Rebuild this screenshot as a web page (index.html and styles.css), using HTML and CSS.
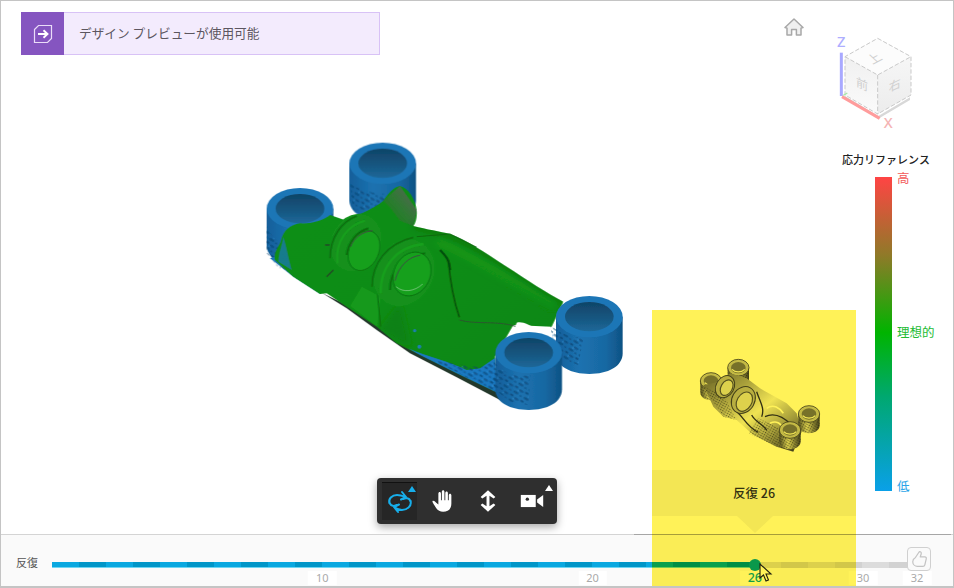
FILE: index.html
```html
<!DOCTYPE html>
<html lang="ja">
<head>
<meta charset="utf-8">
<title>デザイン プレビュー</title>
<link rel="stylesheet" href="styles.css">
</head>
<body>
<div class="frame">
  <main class="viewport">
    <div class="banner">
      <div class="banner-icon">
        <svg viewBox="0 0 20 20" width="20" height="20" fill="none" stroke="#eadcf8">
          <path d="M1.5 5.5 5.5 1.5H18.5V14.5L14.5 18.5H1.5Z" stroke-width="1.2"/>
          <path d="M5 10H14M10.5 6.2 14.5 10 10.5 13.8" stroke="#fff" stroke-width="1.9"/>
        </svg>
      </div>
      <span class="banner-text">デザイン プレビューが使用可能</span>
    </div>

    <svg class="home" viewBox="0 0 20 20" fill="none" stroke="#a8a8a8" stroke-width="1.5">
      <path d="M1 10.5 10 2l9 8.5-2 .6V18h-4.600v-5.500H7.600V18H3v-6.900Z" fill="#f0f0f0" stroke-linejoin="round"/>
    </svg>

    <svg class="navcube" viewBox="0 0 450 390">
      <defs>
        <linearGradient id="faceL" x1="0" y1="0" x2="0" y2="1"><stop offset="0" stop-color="#f0f0f0"/><stop offset="1" stop-color="#fbfbfb"/></linearGradient>
        <linearGradient id="faceR" x1="0" y1="0" x2="0" y2="1"><stop offset="0" stop-color="#f6f6f6"/><stop offset="1" stop-color="#ececec"/></linearGradient>
      </defs>
      <polygon points="225,258 325,318 420,262 420,270 325,326 225,266" fill="#d8d8d8"/>
      <polygon points="323,85 423,140 323,195 225,140" fill="#fcfcfc"/>
      <polygon points="225,140 323,195 323,312 225,255" fill="url(#faceL)"/>
      <polygon points="323,195 423,140 423,255 323,312" fill="url(#faceR)"/>
      <path d="M323 85 423 140 423 255 323 312 225 255 225 140ZM225 140 323 195 423 140M323 195V312" fill="none" stroke="#c9c9c9" stroke-width="3" stroke-dasharray="13 6"/>
      <text class="cube-label" transform="translate(323 155) rotate(-28) skewX(20)">上</text>
      <text class="cube-label" transform="translate(276 236) skewY(25)">前</text>
      <text class="cube-label" transform="translate(374 238) skewY(-25)">右</text>
      <path d="M214 128V258" stroke="#a9a9ff" stroke-width="9"/>
      <path d="M216 260 329 325" stroke="#ff9c9c" stroke-width="9"/>
      <path d="M220 256 232 249" stroke="#a8e8a8" stroke-width="4"/>
      <text class="axis-z" x="214" y="110">Z</text>
      <text class="axis-x" x="355" y="355">X</text>
    </svg>

    <!-- 3D model: coordinates are 3x screen pixels -->
    <svg class="model" viewBox="0 0 1170 870">
      <defs>
        <linearGradient id="cyl" x1="0" y1="0" x2="1" y2="0">
          <stop offset="0" stop-color="#125f9a"/><stop offset=".35" stop-color="#1c72b0"/><stop offset=".75" stop-color="#1868a2"/><stop offset="1" stop-color="#0e5284"/>
        </linearGradient>
        <linearGradient id="holeG" x1="0" y1="0" x2="0" y2="1">
          <stop offset="0" stop-color="#104468"/><stop offset=".55" stop-color="#165680"/><stop offset="1" stop-color="#1d6899"/>
        </linearGradient>
        <linearGradient id="bodyG" x1="0" y1="0" x2="1" y2="1">
          <stop offset="0" stop-color="#11901a"/><stop offset=".5" stop-color="#0f8c14"/><stop offset="1" stop-color="#0b8411"/>
        </linearGradient>
        <linearGradient id="topG" x1="0" y1="1" x2="1" y2="0">
          <stop offset="0" stop-color="#0f8514"/><stop offset=".5" stop-color="#2f7a33"/><stop offset="1" stop-color="#5e5e5e"/>
        </linearGradient>
        <pattern id="lattice" width="36" height="28" patternUnits="userSpaceOnUse" patternTransform="rotate(32)">
          <ellipse cx="7" cy="6" rx="6" ry="3" fill="#0a4270" opacity=".65"/>
          <ellipse cx="25" cy="9" rx="8" ry="3.500" fill="#0a4270" opacity=".55"/>
          <ellipse cx="14" cy="21" rx="9" ry="3.500" fill="#0a4270" opacity=".6"/>
          <ellipse cx="31" cy="23" rx="4" ry="2.500" fill="#0a4270" opacity=".5"/>
          <circle cx="17" cy="13" r="2.500" fill="#3b94d4" opacity=".55"/>
        </pattern>
        <filter id="soft"><feGaussianBlur stdDeviation="1.8"/></filter>
        <filter id="softer" x="-30%" y="-30%" width="160%" height="160%"><feGaussianBlur stdDeviation="9"/></filter>
        <clipPath id="bodyClip">
          <path d="M92 335C100 300 120 285 150 280 190 282 225 268 240 255L290 272C330 250 375 235 400 212 415 190 430 172 450 168 475 175 495 205 500 240 502 262 497 278 490 288 530 298 570 305 600 312 650 330 700 365 770 410 830 448 890 490 940 515L905 590 790 585 735 680 745 790 620 730 480 660 440 640 380 590 290 530 230 490 210 492 130 440 75 390C70 370 85 350 92 335Z"/>
        </clipPath>
        <g id="boss">
          <path d="M-100 0V110C-100 150-55 172 0 172S100 150 100 110V0Z" fill="url(#cyl)"/>
          <ellipse rx="100" ry="62" fill="#1e76b6"/>
          <ellipse rx="73" ry="44" fill="url(#holeG)"/>
        </g>
      </defs>
      <g filter="url(#soft)">
        <use href="#boss" x="398" y="100"/>
        <path d="M300 160C330 180 370 190 400 192L420 240H310Z" fill="url(#lattice)"/>
        <use href="#boss" x="150" y="236"/>
        <path d="M50 290C65 320 80 335 100 340L90 420 50 370Z" fill="url(#lattice)"/>
        <path d="M60 385 130 440 210 492 230 470 170 420 100 370Z" fill="#1a74b4"/>
        <path d="M60 385 130 440 210 492 190 440 110 380Z" fill="url(#lattice)"/>

        <path d="M215 488 290 535 380 600 480 670 620 742 760 815 745 785 620 725 480 655 380 585 290 525Z" fill="#24372c"/>

        <g clip-path="url(#bodyClip)">
          <rect width="1170" height="870" fill="url(#bodyG)"/>
          <path d="M400 212 450 168 500 240 490 288 450 272 420 232Z" fill="url(#topG)"/>
          <path d="M560 330C660 370 780 450 920 520" fill="none" stroke="#1aa021" stroke-width="34" opacity=".45" filter="url(#softer)"/>
          <path d="M490 288C570 305 650 330 770 410 830 448 890 490 940 515" fill="none" stroke="#06600b" stroke-width="12" opacity=".6" filter="url(#softer)"/>
          <path d="M390 600 480 650 450 520Z" fill="#0c7e12" opacity=".7" filter="url(#softer)"/>
          <path d="M300 528 382 590 392 500 335 470Z" fill="#15991c"/>
          <path d="M475 655C530 680 600 695 650 720L690 715 740 680 745 800 620 745Z" fill="#1a78c0"/>
          <path d="M540 690 620 725 745 800 745 690 690 712Z" fill="url(#lattice)"/>
          <path d="M100 320C95 350 85 370 85 395L125 420C115 385 110 350 100 320Z" fill="#1a74b4" opacity=".75"/>
        </g>

        <path d="M500 320 600 312 680 352" fill="none" stroke="#0a6a0f" stroke-width="3"/>
        <path d="M595 390C600 450 610 510 628 562" fill="none" stroke="#06560a" stroke-width="5"/>
        <path d="M570 360C590 380 600 395 600 420" fill="none" stroke="#05500a" stroke-width="7"/>
        <path d="M628 570C680 585 740 570 800 590" fill="none" stroke="#2a5a30" stroke-width="3"/>
        <path d="M380 470 392 590" fill="none" stroke="#086a0d" stroke-width="3"/>
        <path d="M240 345 225 345M230 440 250 420" fill="none" stroke="#234a28" stroke-width="4"/>
        <circle cx="494" cy="602" r="5" fill="#1b7fb0"/>
        <circle cx="508" cy="650" r="6" fill="#1b7fb0"/>

        <ellipse cx="318" cy="338" rx="76" ry="90" transform="rotate(30 318 338)" fill="#12901a"/>
        <path d="M240 385C240 320 275 275 320 258" fill="none" stroke="#087010" stroke-width="5"/>
        <path d="M262 400C255 330 295 285 345 272" fill="none" stroke="#18a01f" stroke-width="6"/>
        <path d="M290 375C295 335 320 305 355 295" fill="none" stroke="#086a0e" stroke-width="5"/>
        <ellipse cx="342" cy="362" rx="44" ry="62" transform="rotate(24 342 362)" fill="#17a01e" stroke="#0a6a0e" stroke-width="2"/>
        <path d="M302 350C310 325 335 305 368 302" fill="none" stroke="#40503f" stroke-width="3"/>

        <ellipse cx="462" cy="428" rx="90" ry="106" transform="rotate(32 462 428)" fill="#12901a"/>
        <path d="M366 470C366 400 410 340 490 322" fill="none" stroke="#087010" stroke-width="5"/>
        <path d="M392 490C390 410 440 350 520 342" fill="none" stroke="#18a01f" stroke-width="7"/>
        <path d="M420 480C420 420 460 375 525 370" fill="none" stroke="#086a0e" stroke-width="5"/>
        <ellipse cx="486" cy="432" rx="54" ry="68" transform="rotate(26 486 432)" fill="#17a01e" stroke="#0a6a0e" stroke-width="2"/>
        <path d="M435 452C445 410 475 380 510 376" fill="none" stroke="#3c5040" stroke-width="3"/>
        <path d="M438 470C458 488 492 486 518 462" fill="none" stroke="#bfe0bf" stroke-width="1.500"/>

        <path d="M800 578C815 572 840 585 860 598 835 600 810 600 795 592Z" fill="#fff"/>
        <use href="#boss" x="1018" y="560"/>
        <path d="M900 585C930 610 960 620 1000 625L985 705 920 680Z" fill="url(#lattice)"/>
        <use href="#boss" x="836" y="668"/>
        <path d="M735 700C760 730 800 745 840 735L835 825 780 815 725 770Z" fill="url(#lattice)"/>
      </g>
    </svg>

    <section class="legend">
      <h2 class="legend-title">応力リファレンス</h2>
      <div class="legend-scale">
        <div class="legend-bar"></div>
        <div class="legend-labels">
          <span class="lab-high">高</span>
          <span class="lab-ideal">理想的</span>
          <span class="lab-low">低</span>
        </div>
      </div>
    </section>

    <div class="toolbar">
      <button class="tool tool-active">
        <svg viewBox="0 0 30 30" width="30" height="30" fill="none" stroke="#17aeea" stroke-width="2" stroke-linecap="round" stroke-linejoin="round">
          <path d="M4.500 16C3 12 7 8 12 8 15 8 18 9 21 10M17 5 21 10 16 12.500"/>
          <path d="M25.500 14C27 19 22 23 17 23 14 23 12 22 9 20M13 25 9 20 14 17.500"/>
          <path d="M4.500 16C6 19 9 19.500 12 18M25.500 14C24 11 21 10.500 18 12"/>
        </svg>
        <i class="caret caret-blue"></i>
      </button>
      <button class="tool">
        <svg viewBox="0 0 30 30" width="26" height="26" fill="#fff">
          <path d="M6 17c-1.500-2-3.500-3-4.200-2-.6.900 1 3 2.500 5.500C6.800 25 9.500 27.500 14 27.500c6 0 9.500-3.500 9.500-9.500V8.500c0-1.100-.7-1.800-1.500-1.800s-1.500.7-1.500 1.800V14h-1V5.800C19.500 4.700 18.800 4 18 4s-1.500.7-1.500 1.800V14h-1V4.500c0-1.100-.7-1.800-1.500-1.800s-1.500.7-1.500 1.800V14h-1V6.500c0-1.100-.7-1.800-1.500-1.800S8.500 5.400 8.500 6.500V19Z"/>
        </svg>
      </button>
      <button class="tool">
        <svg viewBox="0 0 30 30" width="26" height="26" fill="#fff">
          <path d="M15 2.500 23.500 10.500 21.500 12 16.700 9V21L21.500 18 23.500 19.500 15 27.500 6.500 19.500 8.500 18 13.300 21V9L8.500 12 6.500 10.500Z"/>
        </svg>
      </button>
      <button class="tool">
        <svg viewBox="0 0 30 30" width="28" height="28" fill="#fff">
          <path d="M3 8.500H19V21.500H3Z"/><path d="M20.500 13.500 27 8.500V21.500L20.500 16.500Z"/>
          <circle cx="10" cy="13" r="1.800" fill="#2f2f2f"/>
        </svg>
        <i class="caret caret-white"></i>
      </button>
    </div>

    <aside class="preview">
      <svg class="preview-thumb" viewBox="0 0 450 345">
        <defs>
          <linearGradient id="grayBody" x1="0" y1="0" x2="1" y2="1">
            <stop offset="0" stop-color="#666"/><stop offset=".28" stop-color="#aaa"/><stop offset=".52" stop-color="#f0f0f0"/><stop offset=".72" stop-color="#aaa"/><stop offset="1" stop-color="#3a3a3a"/>
          </linearGradient>
          <linearGradient id="grayCyl" x1="0" y1="0" x2="1" y2="0">
            <stop offset="0" stop-color="#555"/><stop offset=".4" stop-color="#dcdcdc"/><stop offset="1" stop-color="#444"/>
          </linearGradient>
          <pattern id="grain" width="8" height="7" patternUnits="userSpaceOnUse" patternTransform="rotate(30)">
            <rect width="4" height="3" fill="#222" opacity=".6"/>
          </pattern>
          <filter id="thumbSoft"><feGaussianBlur stdDeviation="1"/></filter>
          <g id="thumbBoss">
            <path d="M-32 0V34C-32 50-16 58 0 58S32 50 32 34V0Z" fill="url(#grayCyl)"/>
            <path d="M-32 0V34C-32 50-16 58 0 58S32 50 32 34V0Z" fill="url(#grain)"/>
            <ellipse rx="32" ry="25" fill="#c4c4c4" stroke="#444" stroke-width="2.500"/>
            <ellipse rx="22" ry="17" fill="#777"/>
            <path d="M-19 5C-10 15 10 15 19 5" fill="none" stroke="#f2f2f2" stroke-width="4"/>
          </g>
        </defs>
        <g filter="url(#thumbSoft)">
          <use href="#thumbBoss" x="175" y="68"/>
          <use href="#thumbBoss" x="93" y="108"/>
          <path d="M70 120 120 110 150 85 200 100 240 130 320 175 350 205 365 260 340 320 290 305 220 270 170 225 130 215 100 185Z" fill="url(#grayBody)"/>
          <path d="M70 125 130 215 170 225 130 150Z" fill="url(#grain)"/>
          <path d="M205 265 290 305 340 318 345 280 290 245 235 220Z" fill="url(#grain)"/>
          <path d="M170 200C190 215 200 245 235 262M230 140C240 170 255 190 245 215M255 215C285 200 315 220 335 240M215 210C225 230 245 235 260 255" fill="none" stroke="#333" stroke-width="4"/>
          <path d="M260 190C280 175 300 190 310 205M270 235C290 225 300 235 312 250" fill="none" stroke="#fff" stroke-width="5"/>
          <ellipse cx="135" cy="125" rx="27" ry="35" transform="rotate(30 135 125)" fill="#b8b8b8" stroke="#444" stroke-width="3"/>
          <ellipse cx="140" cy="128" rx="17" ry="25" transform="rotate(30 140 128)" fill="#ddd" stroke="#555" stroke-width="3.500"/>
          <ellipse cx="190" cy="165" rx="34" ry="42" transform="rotate(30 190 165)" fill="#b8b8b8" stroke="#444" stroke-width="3"/>
          <ellipse cx="193" cy="170" rx="22" ry="31" transform="rotate(30 193 170)" fill="#ddd" stroke="#555" stroke-width="3.500"/>
          <use href="#thumbBoss" x="387" y="207"/>
          <use href="#thumbBoss" x="330" y="255"/>
        </g>
      </svg>
      <div class="preview-band">反復 26</div>
    </aside>
  </main>

  <footer class="bar">
    <span class="bar-label">反復</span>
    <div class="axis">
      <div class="track">
        <div class="track-fill" style="width:81.25%"></div>
      </div>
      <span class="tick" style="left:31.25%">10</span>
      <span class="tick" style="left:62.5%">20</span>
      <span class="tick tick-current" style="left:81.25%">26</span>
      <span class="tick" style="left:93.75%">30</span>
      <span class="tick" style="left:100%">32</span>
    </div>
    <button class="like">
      <svg viewBox="0 0 24 24" width="20" height="20" fill="none" stroke="#c4c4c4" stroke-width="1.5" stroke-linejoin="round">
        <path d="M7.500 10.500 12.500 3c1.800 0 2.600 1.400 2.100 3L13.500 9.500H19c1.300 0 2 1 1.700 2.300L19 19c-.3 1-1 1.700-2.200 1.700H10c-2.500 0-5.500-1.700-5.500-5.500 0-2.200 1-3.700 3-4.700Z"/>
      </svg>
    </button>
    <svg class="cursor" viewBox="0 0 14 20" width="14" height="20">
      <path d="M1 1V15L4.500 12 7 18 9.500 17 7 11H12Z" fill="#fff" stroke="#222" stroke-width="1.100"/>
    </svg>
  </footer>
  <div class="highlight"></div>
</div>
</body>
</html>
```
FILE: styles.css
```css
* { box-sizing: border-box; }

html, body {
  margin: 0;
  padding: 0;
  background: #fff;
}

body {
  width: 954px;
  height: 588px;
  overflow: hidden;
  font-family: "Noto Sans", "Noto Sans CJK JP", sans-serif;
}

.frame {
  position: relative;
  width: 954px;
  height: 588px;
  display: flex;
  flex-direction: column;
  background: #fff;
}

.frame::after {
  content: "";
  position: absolute;
  inset: 0;
  border: 1px solid #c4c4c4;
  border-bottom-width: 2px;
  pointer-events: none;
}

.viewport {
  position: relative;
  flex: 1;
  padding: 12px 0 0 21px;
}

/* banner */
.banner {
  display: flex;
  align-items: stretch;
  width: 359px;
  height: 43px;
  background: #f3ebfd;
  border: 1px solid #d8c2f6;
  border-left: 0;
}

.banner-icon {
  width: 43px;
  margin: -1px 0;
  background: #8555c0;
  display: flex;
  align-items: center;
  justify-content: center;
}

.banner-text {
  margin: -2px 0 0 15px;
  align-self: center;
  font: 12.7px/16px "Noto Sans CJK JP", sans-serif;
  color: #5c5660;
}

/* viewport overlays */
.home {
  position: absolute;
  left: 784px;
  top: 17px;
  width: 20px;
  height: 20px;
}

.navcube {
  position: absolute;
  left: 770px;
  top: 10px;
  width: 150px;
  height: 130px;
}

.cube-label {
  font: 36px "Noto Sans CJK JP", sans-serif;
  fill: #cfcfcf;
  text-anchor: middle;
}

.axis-z, .axis-x {
  font: 500 44px "Noto Sans", sans-serif;
  text-anchor: middle;
}
.axis-z { fill: #aeaeff; }
.axis-x { fill: #f4b4b4; }

.model {
  position: absolute;
  left: 250px;
  top: 130px;
  width: 390px;
  height: 290px;
}

/* legend */
.legend {
  position: absolute;
  left: 842px;
  top: 151px;
  width: 100px;
}

.legend-title {
  margin: 0;
  width: 88px;
  font: 500 11px/16px "Noto Sans CJK JP", sans-serif;
  color: #222;
  text-align: center;
  white-space: nowrap;
}

.legend-scale {
  display: flex;
  margin: 10px 0 0 33px;
}

.legend-bar {
  width: 17px;
  height: 314px;
  background: linear-gradient(180deg, #ff4444 0%, #8f7a28 25%, #00b400 49.5%, #00a870 70%, #0aa0e8 100%);
}

.legend-labels {
  display: flex;
  flex-direction: column;
  justify-content: space-between;
  height: 324px;
  margin: -7px 0 0 5px;
  font: 12.5px/16px "Noto Sans CJK JP", sans-serif;
}

.lab-high { color: #f25a5a; }
.lab-ideal { color: #22bb33; white-space: nowrap; }
.lab-low { color: #2ba5e8; }

/* toolbar */
.toolbar {
  position: absolute;
  left: 377px;
  top: 478px;
  width: 180px;
  height: 46px;
  padding: 4px 0 4px 5px;
  display: flex;
  background: #2f2f2f;
  border-radius: 4px;
  box-shadow: 0 3px 8px rgba(0, 0, 0, .35);
}

.tool {
  position: relative;
  width: 44px;
  padding: 0;
  border: 0;
  background: none;
  display: flex;
  align-items: center;
  justify-content: center;
}

.tool-active {
  width: 35px;
  margin-right: 5px;
  background: #262626;
  border-top: 1px solid #111;
}

.caret {
  position: absolute;
  width: 0;
  height: 0;
  border-left: 4px solid transparent;
  border-right: 4px solid transparent;
  border-bottom: 6px solid #17aeea;
}
.caret-blue { right: 1px; top: 3px; }
.caret-white { border-bottom-color: #fff; right: 1px; top: 3px; }

/* preview */
.preview {
  position: absolute;
  left: 652px;
  top: 310px;
  width: 204px;
}

.preview-thumb {
  display: block;
  width: 150px;
  height: 115px;
  margin: 35px 0 10px 28px;
}

.preview-band {
  position: relative;
  height: 46px;
  background: #f3f3f3;
  text-align: center;
  font: 500 12.5px/46px "Noto Sans CJK JP", sans-serif;
  color: #333;
}

.preview-band::after {
  content: "";
  position: absolute;
  left: 85px;
  top: 46px;
  border-left: 18px solid transparent;
  border-right: 18px solid transparent;
  border-top: 17px solid #f3f3f3;
}

.highlight {
  position: absolute;
  left: 652px;
  top: 310px;
  width: 204px;
  height: 278px;
  background: #fff258;
  mix-blend-mode: multiply;
  pointer-events: none;
}

/* bottom bar */
.bar {
  position: relative;
  flex: none;
  height: 54px;
  display: flex;
  align-items: flex-start;
  padding: 19px 0 0 16px;
  background: #fafafa;
  border-top: 1px solid #d4d4d4;
}

.bar::before {
  content: "";
  position: absolute;
  left: 634px;
  right: 3px;
  top: -1px;
  height: 1px;
  background: #a6a6a6;
}

.bar-label {
  width: 36px;
  font: 11px/16px "Noto Sans CJK JP", sans-serif;
  color: #555;
}

.axis {
  position: relative;
  width: 865px;
}

.track {
  height: 6px;
  margin-top: 8px;
  background: repeating-linear-gradient(90deg, #dcdcdc 0 27px, #d2d2d2 27px 54px);
}

.track-fill {
  position: relative;
  height: 6px;
  background: repeating-linear-gradient(90deg, #0aa8e0 0 27px, #0096c8 27px 54px);
  border-bottom: 1px solid #6fd6f2;
}

.track-fill::after {
  content: "";
  position: absolute;
  right: -6px;
  top: -3px;
  width: 12px;
  height: 12px;
  border-radius: 50%;
  background: #0aa0d8;
}

.tick {
  position: absolute;
  top: 17px;
  padding: 0 8px;
  transform: translateX(-50%);
  background: #fff;
  font: 11px/14px "Noto Sans", sans-serif;
  color: #aaa;
}

.tick-current {
  color: #12a6c8;
  font-size: 12.5px;
  font-weight: 500;
}

.like {
  position: absolute;
  left: 907px;
  top: 12px;
  width: 24px;
  height: 24px;
  padding: 0;
  display: flex;
  align-items: center;
  justify-content: center;
  background: #fafafa;
  border: 1px solid #d0d0d0;
  border-radius: 4px;
}

.cursor {
  position: absolute;
  left: 759px;
  top: 28px;
}
```
